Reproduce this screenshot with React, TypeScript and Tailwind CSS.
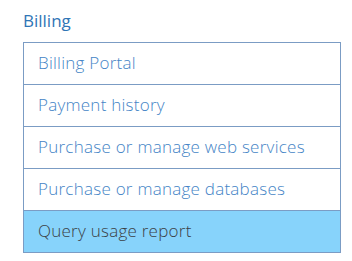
import React from "react";

const items = [
  "Billing Portal",
  "Payment history",
  "Purchase or manage web services",
  "Purchase or manage databases",
  "Query usage report",
];

export default function App() {
  return (
    <div className="w-[352px] h-[261px] bg-white pl-[23px] pr-[11px] pt-[10px]" style={{ fontFamily: '"Open Sans", sans-serif' }}>
      <h2 className="text-[17px] leading-[22px] font-medium text-[#2f75b6]">Billing</h2>
      <div className="mt-[10px] border border-[#7b9cc4] flex flex-col">
        {items.map((t, i) => (
          <div
            key={t}
            className={
              "flex items-center pl-[14px] pb-[2px] text-[17px] tracking-[0.25px] font-light " +
              (i > 0 ? "border-t border-[#7b9cc4] h-[42px] " : "h-[41px] ") +
              (i === items.length - 1 ? "bg-[#87d3fb] text-[#3b3f45]" : "text-[#4484c6]")
            }
          >
            {t}
          </div>
        ))}
      </div>
    </div>
  );
}
